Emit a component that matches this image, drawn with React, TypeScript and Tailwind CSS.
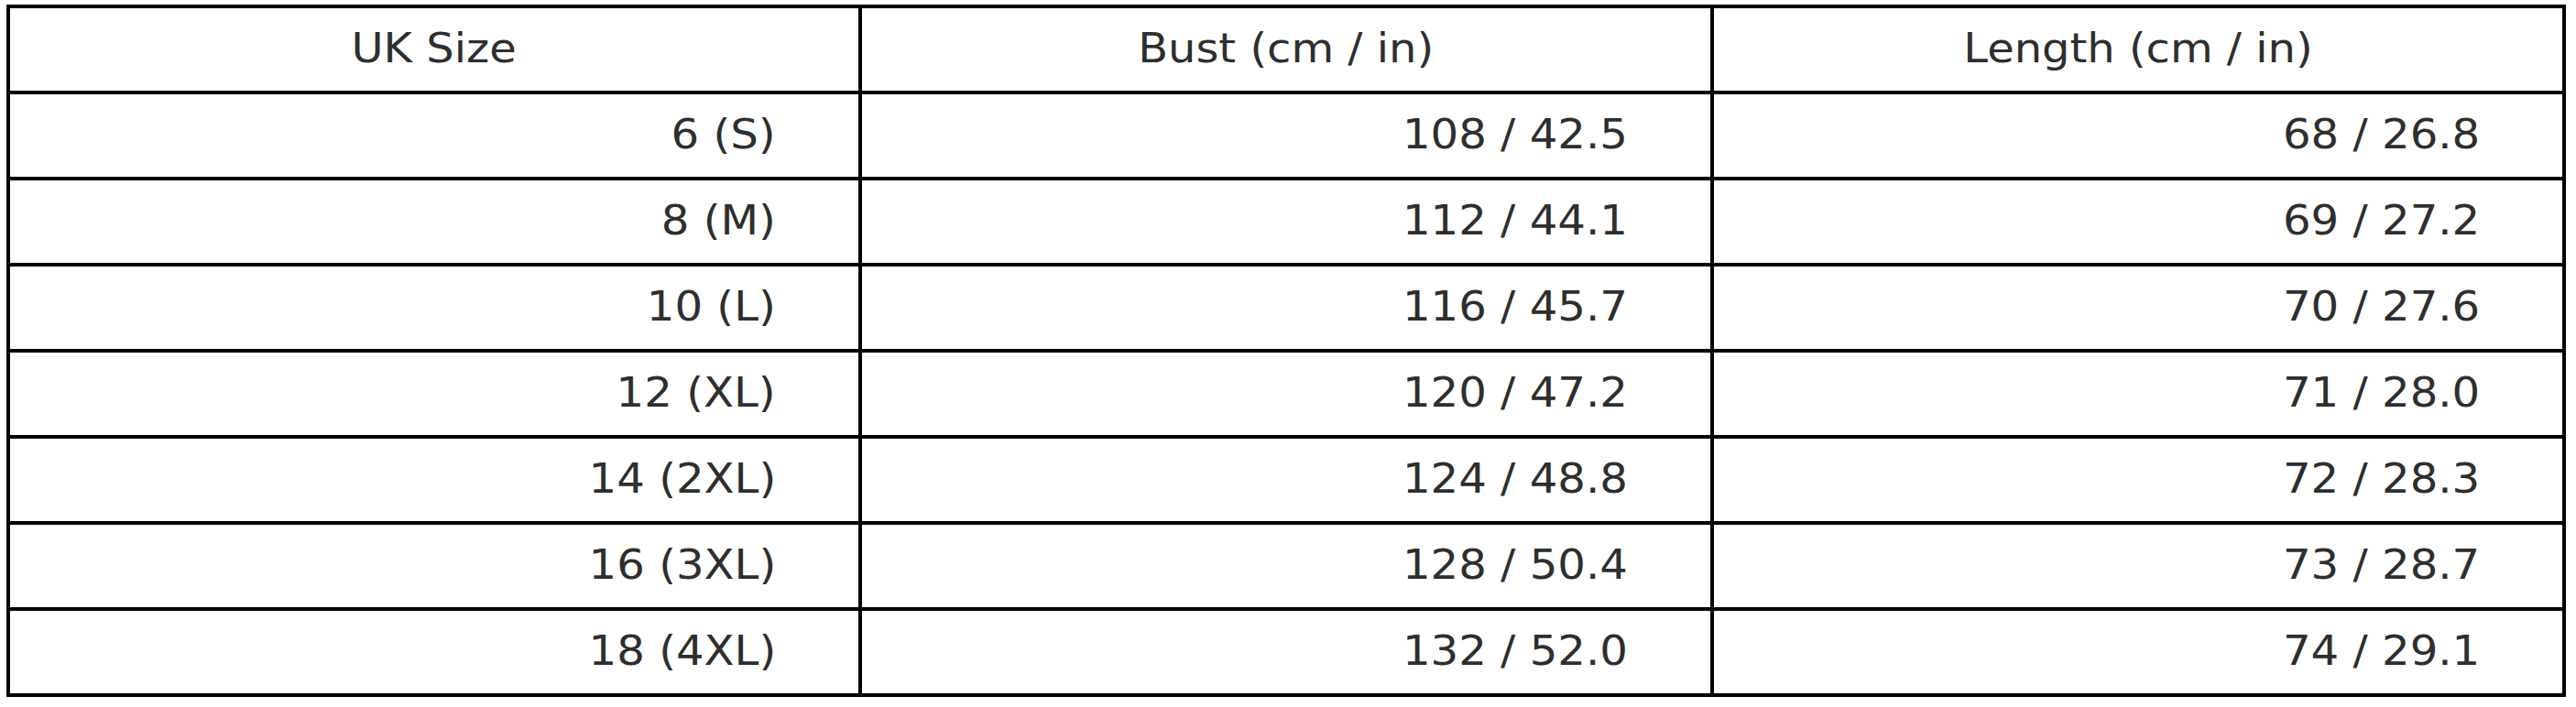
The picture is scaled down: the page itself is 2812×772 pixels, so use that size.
import React from "react";

const rows: [string, string, string][] = [
  ["6 (S)", "108 / 42.5", "68 / 26.8"],
  ["8 (M)", "112 / 44.1", "69 / 27.2"],
  ["10 (L)", "116 / 45.7", "70 / 27.6"],
  ["12 (XL)", "120 / 47.2", "71 / 28.0"],
  ["14 (2XL)", "124 / 48.8", "72 / 28.3"],
  ["16 (3XL)", "128 / 50.4", "73 / 28.7"],
  ["18 (4XL)", "132 / 52.0", "74 / 29.1"],
];

const headers = ["UK Size", "Bust (cm / in)", "Length (cm / in)"];

export default function App() {
  return (
    <div className="w-[2812px] h-[772px] bg-white pt-[5px] pl-[7px] overflow-hidden">
      <div
        className="grid grid-cols-[930px_930px_930px] auto-rows-[94px] w-[2794px] border-t-4 border-l-4 border-black text-[#2e2e2e] text-[45px] leading-none"
        style={{ fontFamily: '"DejaVu Sans", "Liberation Sans", sans-serif' }}
      >
        {headers.map((h) => (
          <div
            key={h}
            className="border-r-4 border-b-4 border-black flex items-center justify-center pb-[4px]"
          >
            <span className="inline-block scale-x-[1.065] origin-center whitespace-nowrap">{h}</span>
          </div>
        ))}
        {rows.map((r) =>
          r.map((c, i) => (
            <div
              key={r[0] + i}
              className="border-r-4 border-b-4 border-black flex items-center justify-end pr-[90px] pb-[4px]"
            >
              <span className="inline-block scale-x-[1.07] origin-right whitespace-nowrap">{c}</span>
            </div>
          ))
        )}
      </div>
    </div>
  );
}
